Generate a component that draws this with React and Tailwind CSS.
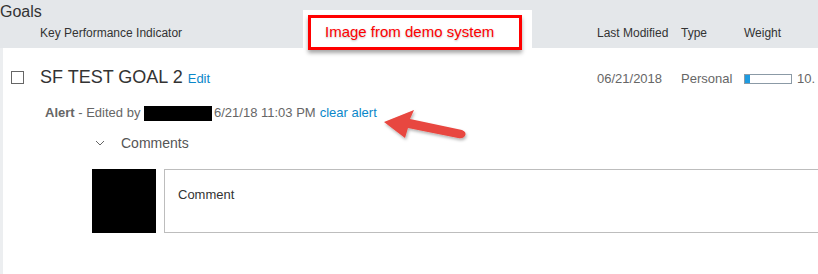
// App.jsx
export default function App() {
  return (
    <div className="relative w-[818px] h-[274px] overflow-hidden bg-white font-['Liberation_Sans',Arial,sans-serif] text-[#333]">
      <div className="h-full border-l-[3px] border-[#eceef0]">
        {/* header */}
        <div className="h-[48px] bg-[#e4e7ea] -ml-[3px] flex flex-col">
          <div className="h-[26px] pt-[2px] text-[16px] leading-[20px] text-[#333]">Goals</div>
          <div className="flex text-[12px] leading-[14px] text-[#333]">
            <div className="pl-[40px] w-[597px]">Key Performance Indicator</div>
            <div className="w-[84px]">Last Modified</div>
            <div className="w-[63px]">Type</div>
            <div>Weight</div>
          </div>
        </div>

        {/* goal row */}
        <div className="flex items-center h-[56px] pt-[2px] -ml-[3px]">
          <div className="w-[40px] flex justify-center pl-[1px] pr-[6px]">
            <div className="w-[13px] h-[13px] border border-[#666] bg-white" />
          </div>
          <div className="w-[557px] flex items-baseline gap-[5px]">
            <span className="text-[18px] text-[#333]">SF TEST GOAL 2</span>
            <span className="text-[13px] text-[#0b87c9]">Edit</span>
          </div>
          <div className="w-[84px] text-[13px] text-[#666] pt-[3px]">06/21/2018</div>
          <div className="w-[63px] text-[13px] text-[#666] pt-[3px]">Personal</div>
          <div className="flex items-center gap-[5px] pt-[3px]">
            <div className="w-[48px] h-[10px] border border-[#8b9aa6] bg-white">
              <div className="w-[5px] h-full bg-[#1e9be0]" />
            </div>
            <span className="text-[13px] text-[#666]">10.</span>
          </div>
        </div>

        {/* alert line */}
        <div className="flex items-center h-[24px] pl-[42px] text-[13px] text-[#666] mt-[-3px]">
          <span className="font-bold">Alert</span>
          <span>&nbsp;- Edited by&nbsp;</span>
          <span className="inline-block w-[68px] h-[15px] bg-black" />
          <span className="ml-[2px]">6/21/18 11:03 PM</span>
          <span className="ml-[4px] text-[#0b87c9]">clear alert</span>
        </div>

        {/* comments toggle */}
        <div className="flex items-center h-[30px] pl-[92px] mt-[3px]">
          <svg width="10" height="6" viewBox="0 0 10 6" className="text-[#666]">
            <path d="M1 1 L5 5 L9 1" fill="none" stroke="currentColor" strokeWidth="1" />
          </svg>
          <span className="ml-[16px] text-[14px] text-[#555]">Comments</span>
        </div>

        {/* comment entry */}
        <div className="flex gap-[8px] pl-[89px] mt-[11px]">
          <div className="w-[64px] h-[64px] bg-black shrink-0" />
          <div className="flex-1 h-[64px] border border-[#bdbdbd] border-r-0 pl-[13px] pt-[15px] text-[13px] text-[#333]">
            Comment
          </div>
        </div>
      </div>

      {/* annotation overlay */}
      <div className="absolute left-[303px] top-[10px] w-[229px] h-[38px] bg-white">
        <div className="absolute left-[5px] top-[5px] w-[214px] h-[35px] border-[3px] border-[#ff0000] bg-white shadow-[0_3px_4px_rgba(0,0,0,0.35)] flex items-center pl-[14px] text-[15px] text-[#ff0000] [text-shadow:0_1px_2px_rgba(0,0,0,0.25)]">
          Image from demo system
        </div>
      </div>

      {/* arrow */}
      <svg className="absolute left-[380px] top-[106px]" width="95" height="40" viewBox="0 0 95 40">
        <defs>
          <filter id="sh" x="-20%" y="-40%" width="140%" height="180%">
            <feDropShadow dx="1" dy="2" stdDeviation="1.5" floodColor="#000" floodOpacity="0.3" />
          </filter>
        </defs>
        <g filter="url(#sh)" fill="#e8473f">
          <path d="M4 16 L34 4 L30 13 L82 24 Q87 26 85 30 Q83 33 78 32 L28 22 L25 32 Z" />
        </g>
      </svg>
    </div>
  )
}
